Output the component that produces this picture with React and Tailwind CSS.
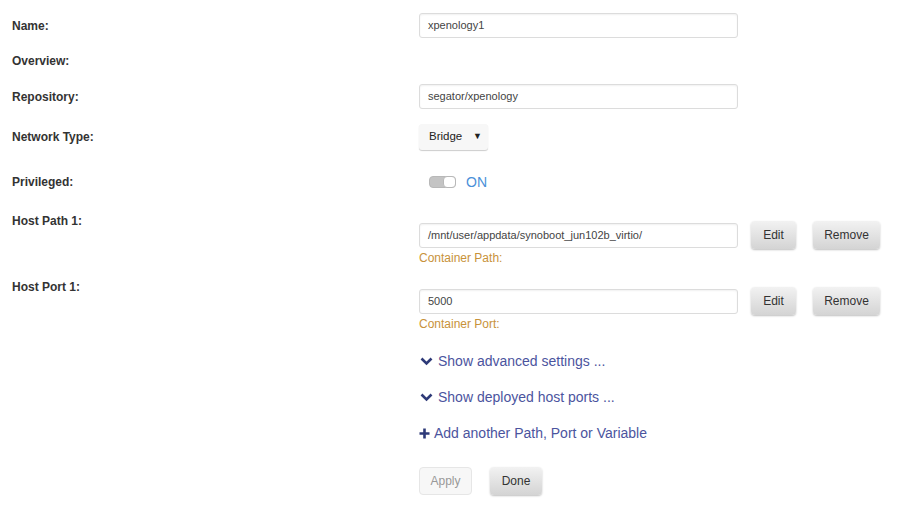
import React from "react";

const font = { fontFamily: '"Liberation Sans", Arial, sans-serif' };

const Label = ({ children }) => (
  <div className="w-[407px] shrink-0 text-[12px] font-bold text-[#333]">{children}</div>
);

const TextBox = ({ value }) => (
  <div className="w-[319px] h-[25px] flex items-center px-[8px] bg-white border border-[#dcdcdc] rounded-[3px] shadow-[inset_0_1px_2px_rgba(0,0,0,0.06)] text-[11px] text-[#444]">
    {value}
  </div>
);

const GrayButton = ({ children, width }) => (
  <button
    className={`${width} h-[28px] rounded-[4px] bg-gradient-to-b from-[#f2f2f2] to-[#d4d4d4] shadow-[0_1px_2px_rgba(0,0,0,0.25)] text-[12px] text-[#333]`}
  >
    {children}
  </button>
);

const Chevron = () => (
  <svg width="13" height="10" viewBox="0 0 13 10" className="mr-[5px]">
    <path d="M1.5 2.5 L6.5 7.5 L11.5 2.5" fill="none" stroke="#2e3a78" strokeWidth="2.6" />
  </svg>
);

const HostRow = ({ label, value, note }) => (
  <div className="flex">
    <div className="w-[407px] shrink-0 text-[12px] font-bold text-[#333] leading-[16px]">{label}</div>
    <div className="pt-[8px]">
      <div className="flex items-center">
        <TextBox value={value} />
        <div className="ml-[13px]"><GrayButton width="w-[45px]">Edit</GrayButton></div>
        <div className="ml-[17px]"><GrayButton width="w-[67px]">Remove</GrayButton></div>
      </div>
      <div className="text-[12px] leading-[16px] mt-[1px] text-[#c8923a]">{note}</div>
    </div>
  </div>
);

const App = () => {
  return (
    <div className="w-[910px] h-[526px] bg-white pl-3 pt-[13px]" style={font}>
      {/* Name */}
      <div className="flex items-center h-[25px]">
        <Label>Name:</Label>
        <TextBox value="xpenology1" />
      </div>

      {/* Overview */}
      <div className="flex items-center h-[22px] mt-[12px]">
        <Label>Overview:</Label>
      </div>

      {/* Repository */}
      <div className="flex items-center h-[25px] mt-[12px]">
        <Label>Repository:</Label>
        <TextBox value="segator/xpenology" />
      </div>

      {/* Network type */}
      <div className="flex items-center h-[26px] mt-[15px]">
        <Label>Network Type:</Label>
        <div className="w-[69px] h-[26px] flex items-center justify-between pl-[10px] pr-[6px] bg-[#f7f7f7] rounded-[3px] shadow-[0_1px_1px_rgba(0,0,0,0.2)] text-[11.5px] text-[#222]">
          <span>Bridge</span>
          <span className="text-[9px]">▼</span>
        </div>
      </div>

      {/* Privileged */}
      <div className="flex items-center h-[24px] mt-[20px]">
        <Label>Privileged:</Label>
        <div className="flex items-center pl-[10px]">
          <div className="relative w-[27px] h-[12px] rounded-[4px] bg-[#c4c4c4] border border-[#b8b8b8]">
            <div className="absolute right-[-1px] top-[-1px] w-[13px] h-[12px] rounded-[4px] bg-white border border-[#b8b8b8]" />
          </div>
          <span className="ml-[10px] text-[14px] text-[#4a90d9]">ON</span>
        </div>
      </div>

      {/* Host Path 1 */}
      <div className="mt-[19px]">
        <HostRow label="Host Path 1:" value="/mnt/user/appdata/synoboot_jun102b_virtio/" note="Container Path:" />
      </div>

      {/* Host Port 1 */}
      <div className="mt-[13px]">
        <HostRow label="Host Port 1:" value="5000" note="Container Port:" />
      </div>

      {/* Links */}
      <div className="pl-[407px] text-[14px] text-[#4b549e]">
        <div className="flex items-center h-[20px] mt-[19px] pl-[1px]">
          <Chevron />
          <span>Show advanced settings ...</span>
        </div>
        <div className="flex items-center h-[20px] mt-[16px] pl-[1px]">
          <Chevron />
          <span>Show deployed host ports ...</span>
        </div>
        <div className="flex items-center h-[20px] mt-[16px]">
          <svg width="11" height="11" viewBox="0 0 11 11" className="mr-[4px]">
            <path d="M5.5 0.5 V10.5 M0.5 5.5 H10.5" stroke="#2e3a78" strokeWidth="2.6" />
          </svg>
          <span>Add another Path, Port or Variable</span>
        </div>
        <div className="flex items-center mt-[24px]">
          <button className="w-[53px] h-[28px] rounded-[4px] bg-[#f7f7f7] border border-[#e6e6e6] text-[12px] text-[#999]">
            Apply
          </button>
          <div className="ml-[18px]"><GrayButton width="w-[52px]">Done</GrayButton></div>
        </div>
      </div>
    </div>
  );
};

export default App;
